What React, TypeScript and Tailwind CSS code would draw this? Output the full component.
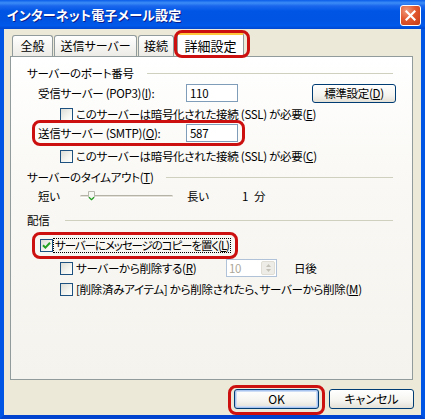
import React from "react";

const U = ({ c }: { c: string }) => <span className="underline underline-offset-[1px]">{c}</span>;

function CB({ checked }: { checked?: boolean }) {
  return (
    <span className="w-[13px] h-[13px] border border-[#1C5180] bg-[linear-gradient(135deg,#DCDCD7_0%,#F4F4F0_60%,#FFFFFF_100%)] flex items-center justify-center shrink-0">
      {checked && (
        <svg width="9" height="9" viewBox="0 0 9 9">
          <path d="M1 4.2 L3.4 6.6 L8 1.8" stroke="#21A121" strokeWidth="2" fill="none" />
        </svg>
      )}
    </span>
  );
}

function Heading({ text, w }: { text: React.ReactNode; w: string }) {
  return (
    <div className="h-[18px] flex items-center">
      <span className={w + " shrink-0 leading-[14px] whitespace-nowrap"}>{text}</span>
      <div className="flex-1 h-px bg-[#D0D0BF] mr-[3px]" />
    </div>
  );
}

export default function App() {
  return (
    <div className="relative w-[425px] h-[419px] flex flex-col overflow-hidden text-[11.5px] tracking-[-0.3px] text-black font-['Noto_Sans_CJK_JP','Noto_Sans',sans-serif] [font-feature-settings:'palt']">
      {/* title bar */}
      <div className="h-[29px] shrink-0 flex items-start justify-between pl-[7px] pr-[4px] bg-[linear-gradient(to_bottom,#0A5CE8_0%,#3D8DF7_10%,#1C68EE_20%,#0055E5_38%,#0054E3_70%,#0059EA_88%,#0047D2_100%)]">
        <div className="h-[29px] flex items-center text-white font-bold text-[13px] tracking-[0.2px] [text-shadow:1px_1px_0_#0A1E8C]">
          インターネット電子メール設定
        </div>
        <div className="mt-[5px] w-[21px] h-[21px] rounded-[3px] border border-white bg-[radial-gradient(circle_at_30%_25%,#F09A7C_0%,#E2582F_45%,#C53A14_100%)] flex items-center justify-center">
          <svg width="11" height="11" viewBox="0 0 11 11">
            <path d="M1.5 1.5 L9.5 9.5 M9.5 1.5 L1.5 9.5" stroke="white" strokeWidth="2.2" strokeLinecap="square" />
          </svg>
        </div>
      </div>

      {/* body */}
      <div className="flex-1 flex flex-col bg-[#ECE9D8] border-l-[4px] border-r-[4px] border-b-[4px] border-l-[#0055E5] border-r-[#0055E5] border-b-[#0043CF] pl-[6px] pr-[8px]">
        {/* tabs */}
        <div className="mt-[3px] h-[24px] flex items-end relative z-10 pl-[2px] text-[12px] tracking-normal">
          <div className="w-[41px] h-[21px] border border-b-0 border-[#919B9C] rounded-t-[3px] bg-[linear-gradient(to_bottom,#FFFFFF,#ECEBE6)] flex items-center justify-center leading-[14px]">全般</div>
          <div className="ml-[1px] w-[83px] h-[21px] border border-b-0 border-[#919B9C] rounded-t-[3px] bg-[linear-gradient(to_bottom,#FFFFFF,#ECEBE6)] flex items-center justify-center leading-[14px]">送信サーバー</div>
          <div className="ml-[1px] w-[36px] h-[21px] border border-b-0 border-[#919B9C] rounded-t-[3px] bg-[linear-gradient(to_bottom,#FFFFFF,#ECEBE6)] flex items-center justify-center leading-[14px]">接続</div>
          <div className="ml-[3px] w-[67px] h-[25px] mb-[-1px] border border-b-0 border-[#919B9C] border-t-[3px] border-t-[#FFC83C] rounded-t-[3px] bg-white flex items-center justify-center leading-[14px] text-[13px]">詳細設定</div>
        </div>

        {/* panel */}
        <div className="h-[324px] border border-[#919B9C] bg-[linear-gradient(to_bottom,#FFFFFF_0%,#F9F8F4_40%,#F4F3EE_100%)] flex flex-col pl-[16px] pr-[16px]">
          <div className="mt-[7px]">
            <Heading text="サーバーのポート番号" w="w-[120px]" />
          </div>

          <div className="mt-[1px] h-[20px] flex items-center pl-[11px]">
            <span className="w-[148px] shrink-0 leading-[14px]">
              受信サーバー (POP3)(<U c="I" />):
            </span>
            <div className="w-[52px] h-[18px] shrink-0 border border-[#7F9DB9] bg-white flex items-center pl-[3px] leading-[14px]">110</div>
            <button className="ml-[74px] w-[84px] h-[19px] shrink-0 rounded-[3px] border border-[#003C74] bg-[linear-gradient(to_bottom,#FFFFFF_0%,#F5F4EF_60%,#E3E0D6_100%)] flex items-center justify-center leading-[14px]">
              標準設定(<U c="D" />)
            </button>
          </div>

          <div className="mt-[3px] h-[16px] flex items-center pl-[33px]">
            <CB />
            <span className="ml-[3px] leading-[14px] whitespace-nowrap">
              このサーバーは暗号化された接続 (SSL) が必要(<U c="E" />)
            </span>
          </div>

          <div className="mt-[2px] h-[18px] flex items-center pl-[11px]">
            <span className="w-[148px] shrink-0 leading-[14px]">
              送信サーバー (SMTP)(<U c="O" />):
            </span>
            <div className="w-[52px] h-[18px] shrink-0 border border-[#7F9DB9] bg-white flex items-center pl-[3px] leading-[14px]">587</div>
          </div>

          <div className="mt-[6px] h-[16px] flex items-center pl-[33px]">
            <CB />
            <span className="ml-[3px] leading-[14px] whitespace-nowrap">
              このサーバーは暗号化された接続 (SSL) が必要(<U c="C" />)
            </span>
          </div>

          <div className="mt-[4px]">
            <Heading
              text={
                <>
                  サーバーのタイムアウト(<U c="T" />)
                </>
              }
              w="w-[139px]"
            />
          </div>

          <div className="mt-[1px] h-[18px] flex items-center pl-[11px]">
            <span className="w-[42px] shrink-0 leading-[14px]">短い</span>
            <div className="relative w-[93px] h-[18px] shrink-0 flex items-center">
              <div className="w-full h-[3px] rounded-full border-t border-[#B5B3A8] bg-[#E4E2D8] border-b border-b-white" />
              <svg className="absolute left-[8px] top-[4px]" width="7" height="10" viewBox="0 0 7 10">
                <path d="M0.5 0.5 H6.5 V6 L3.5 9 L0.5 6 Z" fill="#F7F7F4" stroke="#B8B8AE" />
                <path d="M1 6.2 L3.5 8.6 L6 6.2" stroke="#21A121" strokeWidth="1.2" fill="none" />
              </svg>
            </div>
            <span className="ml-[14px] w-[55px] shrink-0 leading-[14px]">長い</span>
            <span className="leading-[14px]">1</span>
            <span className="ml-[6px] leading-[14px]">分</span>
          </div>

          <div className="mt-[6px]">
            <Heading text="配信" w="w-[38px]" />
          </div>

          <div className="mt-[8px] h-[16px] flex items-center pl-[13px]">
            <CB checked />
            <span className="border border-dotted border-black px-[1px] leading-[13px] whitespace-nowrap tracking-[-1.1px]">
              サーバーにメッセージのコピーを置く(<U c="L" />)
            </span>
          </div>

          <div className="mt-[6px] h-[18px] flex items-center pl-[33px]">
            <CB />
            <span className="ml-[3px] w-[150px] shrink-0 leading-[14px] whitespace-nowrap">
              サーバーから削除する(<U c="R" />)
            </span>
            <div className="w-[51px] h-[18px] shrink-0 border border-[#AFC2D8] bg-white flex items-center justify-between pl-[2px] pr-px">
              <span className="text-[#ACA899] leading-[14px]">10</span>
              <div className="w-[14px] h-[14px] rounded-[2px] bg-[#EDECE6] border border-[#E0DED4] flex flex-col items-center justify-center gap-[2px]">
                <svg width="5" height="3" viewBox="0 0 5 3">
                  <path d="M0 3 L2.5 0 L5 3 Z" fill="#C4C2B8" />
                </svg>
                <svg width="5" height="3" viewBox="0 0 5 3">
                  <path d="M0 0 L2.5 3 L5 0 Z" fill="#C4C2B8" />
                </svg>
              </div>
            </div>
            <span className="ml-[17px] leading-[14px]">日後</span>
          </div>

          <div className="mt-[4px] h-[16px] flex items-center pl-[33px]">
            <CB />
            <span className="ml-[3px] leading-[14px] whitespace-nowrap">
              [削除済みアイテム] から削除されたら、サーバーから削除(<U c="M" />)
            </span>
          </div>
        </div>

        {/* buttons */}
        <div className="mt-[9px] h-[20px] flex justify-end gap-[10px] mr-[-1px] text-[12px] tracking-normal">
          <button className="w-[85px] h-[20px] rounded-[3px] border border-[#003C74] bg-[linear-gradient(to_bottom,#FFFFFF_0%,#F5F4EF_60%,#E3E0D6_100%)] shadow-[inset_0_0_0_1px_#A9C4EE,inset_0_0_0_2px_#CEDDF6] flex items-center justify-center leading-[14px]">
            OK
          </button>
          <button className="w-[85px] h-[20px] rounded-[3px] border border-[#003C74] bg-[linear-gradient(to_bottom,#FFFFFF_0%,#F5F4EF_60%,#E3E0D6_100%)] flex items-center justify-center leading-[14px]">
            キャンセル
          </button>
        </div>
      </div>

      {/* red annotation outlines */}
      <div className="absolute pointer-events-none left-[174px] top-[30px] w-[76px] h-[28px] border-[3px] border-[#CC1010] rounded-[8px] z-20" />
      <div className="absolute pointer-events-none left-[32px] top-[120px] w-[213px] h-[26px] border-[3px] border-[#CC1010] rounded-[8px] z-20" />
      <div className="absolute pointer-events-none left-[32px] top-[232px] w-[206px] h-[27px] border-[3px] border-[#CC1010] rounded-[8px] z-20" />
      <div className="absolute pointer-events-none left-[228px] top-[385px] w-[97px] h-[30px] border-[3px] border-[#CC1010] rounded-[8px] z-20" />
    </div>
  );
}
